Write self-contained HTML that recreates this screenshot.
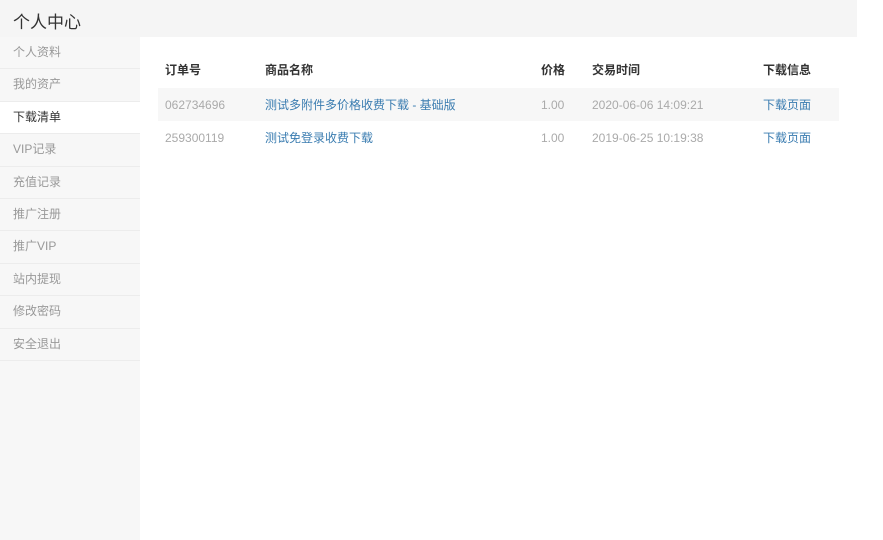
<!DOCTYPE html>
<html><head><meta charset="utf-8"><style>
*{margin:0;padding:0;box-sizing:border-box}
body{width:883px;height:540px;background:#fff;font-family:"Liberation Sans","Noto Sans CJK SC",sans-serif;position:relative;overflow:hidden}
.top{position:absolute;left:0;top:0;width:857px;height:37px;background:#f5f5f5;font-size:17px;color:#333;padding:8px 0 0 13px}
.side{position:absolute;left:0;top:37px;width:140px;height:503px;background:#f7f7f7}
.side div{height:32.4px;line-height:31px;border-bottom:1px solid #ececec;font-size:12px;color:#999;padding-left:13px}
.side div.a{background:#fff;color:#333}
table{position:absolute;left:158px;top:53px;width:681px;border-collapse:collapse;font-size:12px}
th{text-align:left;color:#333;font-weight:bold;height:35px;padding-bottom:3px}
td{height:33px;color:#aaa}
tr.g td{background:#f7f7f7}
td.l{color:#3a7cb0}
th:first-child,td:first-child{padding-left:7px}
</style></head><body>
<div class="top">个人中心</div>
<div class="side">
<div>个人资料</div><div>我的资产</div><div class="a">下载清单</div><div>VIP记录</div><div>充值记录</div><div>推广注册</div><div>推广VIP</div><div>站内提现</div><div>修改密码</div><div>安全退出</div>
</div>
<table>
<colgroup><col style="width:107px"><col style="width:276px"><col style="width:51px"><col style="width:171px"><col></colgroup>
<tr><th>订单号</th><th>商品名称</th><th>价格</th><th>交易时间</th><th>下载信息</th></tr>
<tr class="g"><td>062734696</td><td class="l">测试多附件多价格收费下载 - 基础版</td><td>1.00</td><td>2020-06-06 14:09:21</td><td class="l">下载页面</td></tr>
<tr><td>259300119</td><td class="l">测试免登录收费下载</td><td>1.00</td><td>2019-06-25 10:19:38</td><td class="l">下载页面</td></tr>
</table>
</body></html>
